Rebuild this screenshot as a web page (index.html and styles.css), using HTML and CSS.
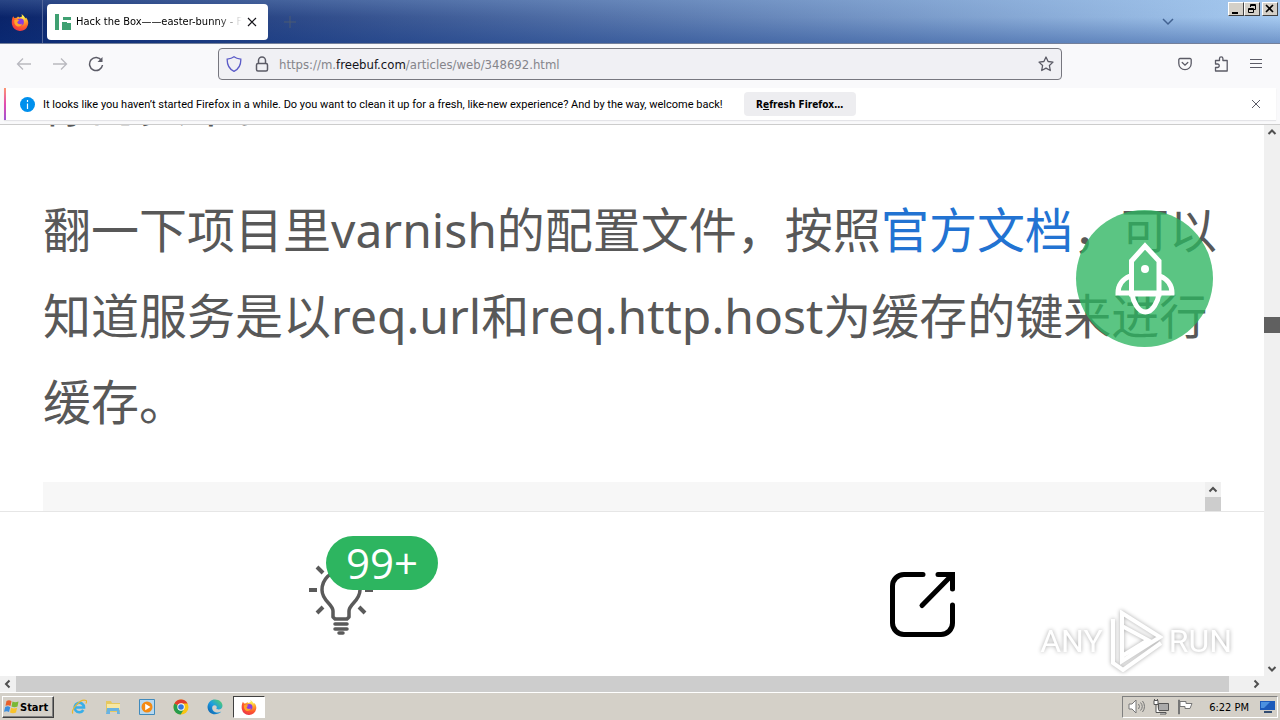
FILE: index.html
```html
<!DOCTYPE html>
<html lang="zh-CN">
<head>
  <meta charset="UTF-8">
  <title>Hack the Box——easter-bunny</title>
  <link rel="stylesheet" href="styles.css">
</head>
<body>
  <svg class="defs" width="0" height="0">
    <defs>
      <radialGradient id="foxBody" cx="70%" cy="15%" r="95%">
        <stop offset="0" stop-color="#fff44f"/>
        <stop offset="0.35" stop-color="#ffa42a"/>
        <stop offset="0.65" stop-color="#ff5a2c"/>
        <stop offset="1" stop-color="#e8304c"/>
      </radialGradient>
      <linearGradient id="edgeBody" x1="0" y1="1" x2="1" y2="0">
        <stop offset="0" stop-color="#0c59a4"/>
        <stop offset="0.5" stop-color="#1b9de2"/>
        <stop offset="1" stop-color="#5ed65a"/>
      </linearGradient>
      <symbol id="firefox" viewBox="0 0 18 18">
        <path fill="url(#foxBody)" d="M2.2 3.2 3.4 5 5.6 4.8 7 3.6 8.5 4.6 11 3.4 10.6 1 12.8 3 14.6 5.4 15 4.4C17 6.600 17.800 9.400 16.800 12.200A8.200 8.200 0 0 1 1 11.600C.4 8.600.9 5.500 2.200 3.200Z"/>
        <circle cx="9.500" cy="9" r="3.400" fill="#8a3ce0"/>
        <path fill="#ffa52b" d="M3.400 7c2-.6 3.600-.4 5 .8-1.400.2-2 1-2.200 1.800.8 1.800 3.200 2.200 5 .8-.6 2.600-3 3.600-5.200 2.800C3.800 12.200 2.800 9.800 3.400 7Z"/>
      </symbol>
    </defs>
  </svg>

  <header class="titlebar">
    <div class="view"><svg width="18" height="18"><use href="#firefox"/></svg></div>
    <div class="tab">
      <svg width="16" height="16" viewBox="0 0 16 16" fill="#3fa072"><path d="M0 0h4v16H0zM8 3h8v3H8zM7 8h5v8H7zM12 9h4v7h-4z"/></svg>
      <span class="tab-title">Hack the Box——easter-bunny - FreeBuf</span>
      <button class="plain" aria-label="Close tab"><svg width="10" height="10" viewBox="0 0 10 10"><path d="M1 1l8 8M9 1l-8 8" stroke="#15141a" stroke-width="1.200"/></svg></button>
    </div>
    <button class="plain new-tab" aria-label="New tab"><svg width="12" height="12" viewBox="0 0 12 12"><path d="M6 0v12M0 6h12" stroke="#4a5a72"/></svg></button>
    <button class="plain list-tabs" aria-label="List all tabs"><svg width="12" height="8" viewBox="0 0 12 8"><path d="M1 1l5 5 5-5" fill="none" stroke="#426291" stroke-width="1.500"/></svg></button>
    <div class="window-buttons">
      <button aria-label="Minimize"><svg width="10" height="10"><path d="M1 9h6" stroke="#000" stroke-width="2"/></svg></button>
      <button aria-label="Restore"><svg width="10" height="10" fill="none" stroke="#000"><path d="M3.500 3V.5h5v5H7M3 1.500h6M1.500 4.500h5v4h-5zM1 5.500h6"/></svg></button>
      <button class="close" aria-label="Close"><svg width="10" height="10"><path d="M1 1l7 7M8 1l-7 7" stroke="#000" stroke-width="1.600"/></svg></button>
    </div>
  </header>

  <nav class="toolbar">
    <div class="history">
      <button class="plain" aria-label="Back"><svg width="16" height="16" viewBox="0 0 16 16" fill="none" stroke="#b9b9bf" stroke-width="1.300"><path d="M15 8H1.500M7 2.500 1.500 8 7 13.500"/></svg></button>
      <button class="plain" aria-label="Forward"><svg width="16" height="16" viewBox="0 0 16 16" fill="none" stroke="#b9b9bf" stroke-width="1.300"><path d="M1 8h13.500M9 2.500 14.500 8 9 13.500"/></svg></button>
      <button class="plain" aria-label="Reload"><svg width="16" height="16" viewBox="0 0 16 16" fill="none" stroke="#5b5b66" stroke-width="1.500"><path d="M13.500 4.500A6.500 6.500 0 1 0 14.500 9"/><path d="M14.500 1v5h-5z" fill="#5b5b66" stroke="none"/></svg></button>
    </div>
    <div class="urlbar">
      <svg width="16" height="16" viewBox="0 0 16 16" fill="none" stroke="#5b5bc8" stroke-width="1.300"><path d="M8 .8c2 1.600 4 2 6.800 2.300.2 5.400-1.600 9.800-6.800 12.200C2.800 12.900 1 8.500 1.200 3.100 4 2.800 6 2.400 8 .8Z"/></svg>
      <svg width="14" height="16" viewBox="0 0 14 16" fill="none" stroke="#5b5b66" stroke-width="1.500"><rect x="1.500" y="7.500" width="11" height="7.500" rx="1.500"/><path d="M3.500 7.500V4.500a3.500 3.500 0 0 1 7 0v3"/></svg>
      <a class="url" href="#">https://m.<b>freebuf.com</b>/articles/web/348692.html</a>
      <button class="plain" aria-label="Bookmark"><svg width="16" height="16" viewBox="0 0 16 16" fill="none" stroke="#5b5b66" stroke-width="1.300" stroke-linejoin="round"><path d="M8 1l2.100 4.500 4.900.6-3.600 3.400.9 5L8 12.100l-4.300 2.400.9-5L1 6.100l4.900-.6z"/></svg></button>
    </div>
    <div class="tools">
      <button class="plain" aria-label="Pocket"><svg width="14" height="14" viewBox="0 0 14 14" fill="none" stroke="#5b5b66" stroke-width="1.300" stroke-linecap="round"><path d="M2 1.500h10a1.200 1.200 0 0 1 1.200 1.200V6.500a6.200 6.200 0 0 1-12.400 0V2.700A1.200 1.200 0 0 1 2 1.500ZM4.200 5.500 7 8.200l2.800-2.700"/></svg></button>
      <button class="plain" aria-label="Extensions"><svg width="14" height="16" viewBox="0 0 14 16" fill="none" stroke="#5b5b66" stroke-width="1.300" stroke-linejoin="round"><path d="M5.500 4.500V2.500a1.700 1.700 0 0 1 3.400 0v2h4.300V15H1.500v-3.500h2a1.600 1.600 0 0 0 0-3.500h-2V4.500z"/></svg></button>
      <button class="plain" aria-label="Menu"><svg width="12" height="12" viewBox="0 0 12 12"><path d="M0 1.500h12M0 5.500h12M0 9.500h12" stroke="#5b5b66"/></svg></button>
    </div>
  </nav>

  <div class="notice-wrap">
    <div class="notice">
      <svg width="15" height="15" viewBox="0 0 15 15"><circle cx="7.500" cy="7.500" r="7.500" fill="#0090ed"/><path d="M7.500 3v2M7.500 6.500V12" stroke="#fff" stroke-width="1.200"/></svg>
      <span class="notice-text">It looks like you haven’t started Firefox in a while. Do you want to clean it up for a fresh, like-new experience? And by the way, welcome back!</span>
      <button class="refresh">R<u>e</u>fresh Firefox…</button>
      <button class="plain dismiss" aria-label="Dismiss"><svg width="8" height="8" viewBox="0 0 8 8"><path d="M0 0l8 8M8 0 0 8" stroke="#5b5b66"/></svg></button>
    </div>
  </div>

  <div class="viewport">
    <main class="page">
      <article class="article">
        <p>你的头中。</p>
        <p>翻一下项目里<span class="latin">varnish</span>的配置文件，按照<a href="#">官方文档</a>，可以知道服务是以<span class="latin">req.url</span>和<span class="latin">req.http.host</span>为缓存的键来进行缓存。</p>
        <div class="code"><div class="code-scroll"><svg width="16" height="15" viewBox="0 0 16 15"><path d="M4.500 9.500 8 6l3.500 3.500" fill="none" stroke="#505050" stroke-width="2"/></svg><i></i></div></div>
      </article>
      <footer class="actions">
        <button class="plain like" aria-label="Like">
          <svg width="66" height="72" viewBox="0 0 66 72" fill="none" stroke="#5a5a5a" stroke-width="4">
            <path d="M25 54v-6c0-7-11-10-11-21a19 19 0 0 1 38 0c0 11-11 14-11 21v6l-2 2H27z" stroke-width="3.500" stroke-linejoin="round"/>
            <path d="M1 27h8M57 27h8M9 4l6 6M57 4l-6 6M9 50l6-6M57 50l-6-6"/>
            <path d="M27 61h12M27 66h12M31 70h4" stroke-linecap="round" stroke-width="3.500"/>
          </svg>
          <span class="badge">99+</span>
        </button>
        <button class="plain share" aria-label="Share">
          <svg width="66" height="66" viewBox="0 0 66 66" fill="none" stroke="#000" stroke-width="5" stroke-linecap="round"><path d="M33 2.500H14A11.500 11.500 0 0 0 2.500 14v37A11.500 11.500 0 0 0 14 62.500h37A11.500 11.500 0 0 0 62.500 51V33M48 2.500h14.500V17M61 4 32 33.500"/></svg>
        </button>
      </footer>
      <button class="plain top" aria-label="Back to top">
        <svg width="60" height="74" viewBox="0 0 60 74" fill="none" stroke="#fff" stroke-width="5"><path d="M16.500 52V19L30 4l14 15v33zM15 34C8 37 3 43 3 51h54c0-8-5-14-12-17M17 52c1 7 6 18 13.500 18S43 59 44 52"/><circle cx="30" cy="27" r="4" fill="#fff" stroke="none"/></svg>
      </button>
      <div class="watermark">
        <span>ANY</span>
        <svg width="54" height="62" viewBox="0 0 54 62" fill="none" stroke="#fff" stroke-width="4"><path d="M13 34V3l38 24-38 24V34M13 16l26 14-26 16M4 9v44l10 7 38-27"/></svg>
        <span>RUN</span>
      </div>
    </main>
    <div class="vscroll">
      <svg width="16" height="14" viewBox="0 0 16 14"><path d="M4.500 9 8 5.500 11.500 9" fill="none" stroke="#505050" stroke-width="2"/></svg>
      <i></i>
      <svg class="down" width="16" height="14" viewBox="0 0 16 14"><path d="M4.500 5 8 8.500 11.500 5" fill="none" stroke="#505050" stroke-width="2"/></svg>
    </div>
  </div>
  <div class="hscroll">
    <svg width="16" height="16" viewBox="0 0 16 16"><path d="M9.500 4.500 6 8l3.500 3.500" fill="none" stroke="#505050" stroke-width="2"/></svg>
    <i></i>
    <svg class="right" width="16" height="16" viewBox="0 0 16 16"><path d="M6.500 4.500 10 8l-3.500 3.500" fill="none" stroke="#505050" stroke-width="2"/></svg>
  </div>

  <footer class="taskbar">
    <button class="start"><svg width="17" height="16" viewBox="0 0 16 16"><path fill="#e8602c" d="M3 2c2-1 3.500-.8 5 .2L7 7C5.500 6 4 6 2 6.800z"/><path fill="#79b837" d="M9 2.600c2 1 3.500 1 6 0L14 7.500c-2 1-4 1-6 0z"/><path fill="#3c8ede" d="M1.700 8c2-1 3.500-.8 5 .2L5.500 13c-1.500-1-3-1-5-.2z"/><path fill="#f8c32c" d="M7.600 8.800c2 1 3.500 1 6 0L12.500 13.500c-2 1-4 1-6 0z"/></svg>Start</button>
    <div class="pinned">
      <button class="plain" aria-label="Internet Explorer"><svg width="16" height="16" viewBox="0 0 16 16" fill="none"><path d="M4 8.500h9A4.700 4.700 0 1 0 12.300 11" stroke="#38aee8" stroke-width="2.600"/><path d="M2 14.500C-1 12 9-1 15 1.500c1 .6.600 2-.2 3" stroke="#e9b72f" stroke-width="1.200"/></svg></button>
      <button class="plain" aria-label="Explorer"><svg width="16" height="16" viewBox="0 0 16 16"><path fill="#e6c860" d="M1 2h5l1 2h8v9H1z"/><path fill="#f7e7a2" d="M2 5h13v6H2z"/><path fill="#69b3e2" d="M2 9h12l1 6h-3v-3H5v3H1z"/></svg></button>
      <button class="plain" aria-label="Media Player"><svg width="16" height="16" viewBox="0 0 16 16"><path fill="#b7d8f0" stroke="#408abc" d="M.5.5h15v15H.5z"/><circle cx="8" cy="8" r="5.500" fill="#f48a13"/><path fill="#fff" d="M6.200 4.800 11.500 8l-5.300 3.200z"/></svg></button>
      <button class="plain" aria-label="Chrome"><svg width="16" height="16" viewBox="0 0 16 16"><circle cx="8" cy="8" r="7.500" fill="#f9c513"/><path fill="#df3c2f" d="M8 8 1.400 4.400A7.500 7.500 0 0 1 14.600 4.500H8z"/><path fill="#279c4d" d="M8 8 1.400 4.400A7.500 7.500 0 0 0 7.700 15.500L11 10z"/><circle cx="8" cy="8" r="3.700" fill="#fff"/><circle cx="8" cy="8" r="2.800" fill="#3478dc"/></svg></button>
      <button class="plain" aria-label="Edge"><svg width="16" height="16" viewBox="0 0 16 16"><path fill="url(#edgeBody)" d="M.5 8C1 3 4 .5 8 .5c4.500 0 7.500 3 7.500 6.200 0 2.300-1.600 3.800-4 3.800-1.500 0-2.300-.5-2-1.200.8-1.700-.3-3-2-3-2.500.2-3 3-1.500 5.200 2 2.500 5.500 2.500 8.300 1C11 16.500 1 17 .5 8Z"/></svg></button>
      <button class="running" aria-label="Firefox"><svg width="16" height="16"><use href="#firefox"/></svg></button>
    </div>
    <div class="tray">
      <svg width="17" height="16" viewBox="0 0 17 16" fill="#fff" stroke="#777"><path d="M1 5h3l4-4v13L4 10H1z"/><path fill="none" d="M10.500 5q2 2.500 0 5M12.500 3.500q3.500 4 0 8M14.500 2q4 5.500 0 11"/></svg>
      <svg width="16" height="16" viewBox="0 0 16 16" fill="#fff" stroke="#555"><path fill="#aaa" d="M5.500 4.500h10v7h-10z"/><path d="M1 1.500h4v4H1zM3 5.500v8h10v1.500H7M1.500 0v2M4.500 0v2"/></svg>
      <svg width="16" height="16" viewBox="0 0 16 16" fill="#fff" stroke="#777"><path d="M1.500 1v14h1V1zM3 2.500h6v2h6l-2 5H8v-2H3z"/></svg>
      <span class="clock">6:22 PM</span>
      <svg width="15" height="14" viewBox="0 0 15 14"><path fill="#1c5aba" d="M0 1h15v9H0z"/><path fill="#4b91e0" d="M1 2h9l-6 6H1z"/><path fill="#324c70" d="M4 11h8v2H4z"/></svg>
    </div>
  </footer>
</body>
</html>
```
FILE: styles.css
```css
* {
  box-sizing: border-box;
}

body {
  margin: 0;
  height: 100vh;
  display: flex;
  flex-direction: column;
  overflow: hidden;
  background: #fff;
  font-family: "DejaVu Sans Condensed", "Noto Sans CJK SC", sans-serif;
  font-size: 11px;
  color: #000;
}

svg {
  display: block;
  flex: none;
}

.defs {
  position: absolute;
}

button {
  font: inherit;
  color: inherit;
  padding: 0;
}

.plain {
  display: block;
  border: 0;
  background: none;
}

/* title bar */
.titlebar {
  flex: none;
  height: 44px;
  display: flex;
  align-items: center;
  border-bottom: 1px solid #74809a;
  background: linear-gradient(rgba(166, 202, 240, 0.2), rgba(10, 36, 106, 0) 40%, rgba(10, 50, 130, 0.35)), linear-gradient(90deg, #0a246a, #a6caf0);
}

.view {
  width: 43px;
  height: 43px;
  padding: 13px 11px;
  border-right: 1px solid #53679a;
}

.tab {
  width: 221px;
  height: 36px;
  margin-left: 4px;
  padding: 0 11px 0 8px;
  display: flex;
  align-items: center;
  gap: 5px;
  background: #fff;
  border-radius: 4px;
}

.tab-title {
  flex: 1;
  overflow: hidden;
  white-space: nowrap;
  line-height: 16px;
  -webkit-mask-image: linear-gradient(90deg, #000 85%, transparent);
  mask-image: linear-gradient(90deg, #000 85%, transparent);
}

.new-tab {
  margin-left: 16px;
}

.list-tabs {
  margin-left: auto;
}

.window-buttons {
  display: flex;
  align-self: flex-start;
  margin: 2px 2px 0 54px;
}

.window-buttons button {
  width: 16px;
  height: 14px;
  padding: 1px 2px;
  background: #d4d0c8;
  border: 1px solid;
  border-color: #fff #404040 #404040 #fff;
}

.window-buttons .close {
  margin-left: 2px;
}

/* navigation */
.toolbar {
  flex: none;
  height: 44px;
  display: flex;
  align-items: center;
  justify-content: space-between;
  padding: 0 18px 4px 16px;
  background: #f9f9fb;
}

.history {
  display: flex;
  gap: 20px;
  width: 202px;
}

.urlbar {
  flex: 1;
  max-width: 844px;
  height: 32px;
  padding: 0 7px;
  display: flex;
  align-items: center;
  gap: 13px;
  background: #f0f0f4;
  border: 1px solid #77777f;
  border-radius: 4px;
}

.url {
  flex: 1;
  margin-left: -3px;
  font-size: 13px;
  color: #85858b;
  text-decoration: none;
}

.url b {
  font-weight: normal;
  color: #15141a;
}

.tools {
  width: 200px;
  display: flex;
  align-items: center;
  justify-content: flex-end;
  gap: 22px;
}

/* notification */
.notice-wrap {
  flex: none;
  height: 37px;
  padding: 0 4px;
  background: #f9f9fb;
  border-bottom: 1px solid #ccc;
}

.notice {
  height: 32px;
  padding: 0 16px 0 14px;
  display: flex;
  align-items: center;
  background: #fff;
  border-left: 2px solid;
  border-image: linear-gradient(#ff9a6c, #e24bb0, #9a52d4) 1;
  box-shadow: 0 1px 1px #e4e4e8;
}

.notice-text {
  margin-left: 8px;
  white-space: nowrap;
  font-family: Roboto, sans-serif;
}

.refresh {
  width: 112px;
  height: 24px;
  margin-left: 21px;
  border: 0;
  border-radius: 4px;
  background: #ededf0;
  font-size: 10px;
  font-weight: bold;
}

.dismiss {
  margin-left: auto;
}

/* page */
.viewport {
  flex: 1;
  min-height: 0;
  display: flex;
}

.page {
  flex: 1;
  position: relative;
  display: flex;
  flex-direction: column;
}

.article {
  flex: 1;
  min-height: 0;
  overflow: hidden;
  display: flex;
  flex-direction: column;
  justify-content: flex-end;
  padding: 0 43px;
  font-family: "Noto Sans CJK SC", sans-serif;
  font-size: 48px;
  line-height: 86px;
  color: #585858;
}

.article p {
  margin: 0 0 40px;
}

.article a {
  color: #2273d2;
  text-decoration: none;
}

.latin {
  font-family: "Noto Sans", "Open Sans", sans-serif;
  line-height: 1;
}

.code {
  flex: none;
  height: 29px;
  background: #f7f7f7;
}

.code-scroll {
  width: 16px;
  margin-left: auto;
  background: #f0f0f0;
}

.code-scroll i {
  display: block;
  height: 14px;
  background: #cdcdcd;
}

.actions {
  flex: none;
  height: 165px;
  display: grid;
  grid-template-columns: 1fr 1fr;
  padding: 0 50px;
  border-top: 1px solid #e6e6e6;
}

.like {
  position: relative;
  justify-self: center;
  align-self: center;
  margin-top: 10px;
}

.badge {
  position: absolute;
  left: 18px;
  top: -27px;
  width: 112px;
  height: 54px;
  line-height: 54px;
  border-radius: 27px;
  background: #2db560;
  color: #fff;
  font-family: "Open Sans", sans-serif;
  font-size: 42px;
}

.share {
  justify-self: center;
  align-self: center;
  margin-top: 22px;
}

.top {
  position: absolute;
  right: 51px;
  top: 85px;
  width: 137px;
  height: 137px;
  padding-left: 39px;
  border-radius: 50%;
  background: rgba(45, 181, 96, 0.78);
}

.watermark {
  position: absolute;
  right: 32px;
  bottom: 4px;
  display: flex;
  align-items: center;
  gap: 6px;
  font-family: Roboto, "Liberation Sans", sans-serif;
  font-size: 32px;
  color: #fff;
  filter: drop-shadow(0 0 2px #aaa);
}

/* scrollbars */
.vscroll {
  width: 16px;
  display: flex;
  flex-direction: column;
  background: #f0f0f0;
}

.vscroll i {
  height: 16px;
  margin-top: 178px;
  background: #606060;
}

.down {
  margin-top: auto;
}

.hscroll {
  flex: none;
  height: 16px;
  display: flex;
  background: #f0f0f0;
}

.hscroll i {
  flex: 1;
  background: #cdcdcd;
}

.right {
  margin: 0 16px 0 19px;
}

/* taskbar */
.taskbar {
  flex: none;
  height: 28px;
  padding: 3px 2px 2px;
  display: flex;
  align-items: center;
  background: #d4d0c8;
  border-top: 1px solid #fff;
}

.start {
  width: 52px;
  height: 22px;
  display: flex;
  align-items: center;
  background: #d4d0c8;
  border: 1px solid;
  border-color: #fff #404040 #404040 #fff;
  box-shadow: inset -1px -1px #808080;
  font-weight: bold;
}

.pinned {
  display: flex;
  align-items: center;
  gap: 18px;
  margin-left: 17px;
}

.running {
  width: 32px;
  height: 22px;
  margin-left: -8px;
  padding: 2px 7px;
  background: #fff;
  border: 1px solid;
  border-color: #404040 #fff #fff #404040;
}

.tray {
  height: 22px;
  margin-left: auto;
  padding: 0 2px 0 5px;
  display: flex;
  align-items: center;
  gap: 8px;
  border: 1px solid;
  border-color: #808080 #fff #fff #808080;
}

.clock {
  margin: 0 3px 0 8px;
}
```
